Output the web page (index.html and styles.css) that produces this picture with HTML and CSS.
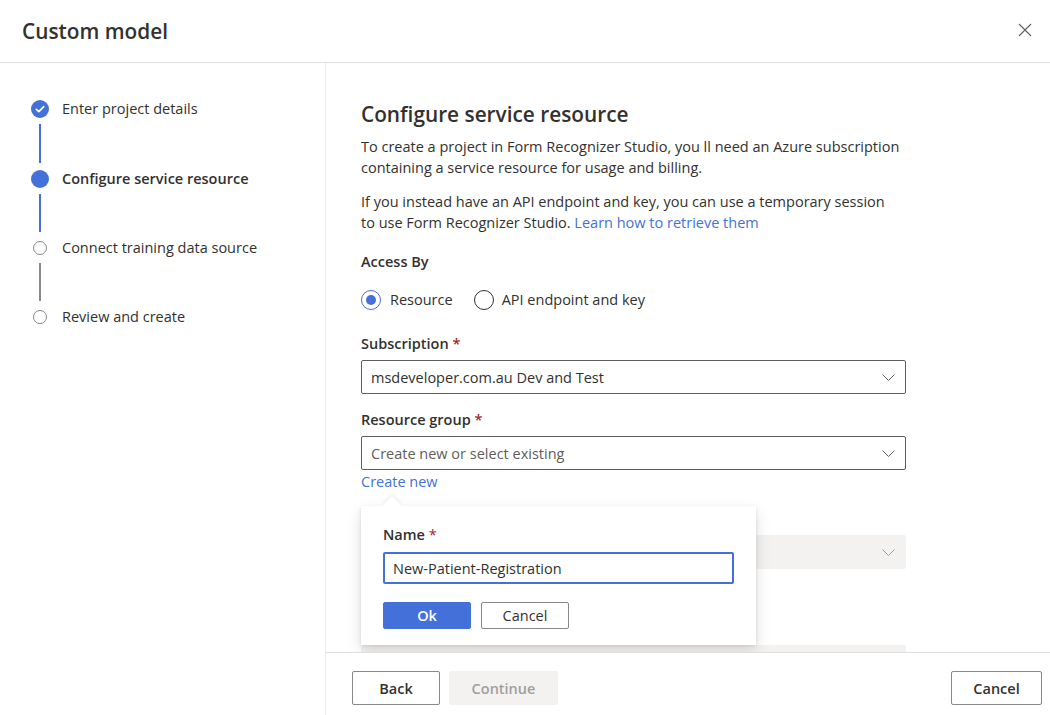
FILE: index.html
```html
<!DOCTYPE html>
<html lang="en">
<head>
<meta charset="utf-8">
<title>Custom model</title>
<link rel="stylesheet" href="styles.css">
</head>
<body>
<div class="dialog">
  <header class="header">
    <h1 class="title">Custom model</h1>
    <button class="close" aria-label="Close">
      <svg width="14" height="14" viewBox="0 0 14 14"><path d="M1 1 L13 13 M13 1 L1 13" stroke="#605e5c" stroke-width="1.1" fill="none"/></svg>
    </button>
  </header>
  <div class="body">
    <nav class="steps">
      <div class="step step-first">
        <div class="rail">
          <span class="dot dot-done"><svg width="18" height="18" viewBox="0 0 18 18"><path d="M5.3 9.3 L7.9 11.7 L12.7 6.6" stroke="#fff" stroke-width="1.7" fill="none" stroke-linecap="round" stroke-linejoin="round"/></svg></span>
          <span class="line line-active"></span>
        </div>
        <span class="step-label">Enter project details</span>
      </div>
      <div class="step">
        <div class="rail">
          <span class="dot dot-current"></span>
          <span class="line line-active"></span>
        </div>
        <span class="step-label step-label-current">Configure service resource</span>
      </div>
      <div class="step">
        <div class="rail">
          <span class="dot-box"><span class="dot-empty"></span></span>
          <span class="line"></span>
        </div>
        <span class="step-label">Connect training data source</span>
      </div>
      <div class="step step-last">
        <div class="rail">
          <span class="dot-box"><span class="dot-empty"></span></span>
        </div>
        <span class="step-label">Review and create</span>
      </div>
    </nav>
    <main class="main">
      <div class="content">
        <div class="form">
          <h2 class="heading">Configure service resource</h2>
          <p class="desc">To create a project in Form Recognizer Studio, you ll need an Azure subscription containing a service resource for usage and billing.</p>
          <p class="desc desc-second">If you instead have an API endpoint and key, you can use a temporary session to use Form Recognizer Studio. <a class="link" href="#">Learn how to retrieve them</a></p>
          <div class="group-label">Access By</div>
          <div class="radios">
            <span class="radio radio-on"><span class="radio-circle"></span><span>Resource</span></span>
            <span class="radio"><span class="radio-circle"></span><span>API endpoint and key</span></span>
          </div>
          <div class="field-label">Subscription <span class="req">*</span></div>
          <div class="select">
            <span class="select-text">msdeveloper.com.au Dev and Test</span>
            <svg class="chev" width="13" height="7" viewBox="0 0 13 7"><path d="M0.5 0.5 L6.5 6.5 L12.5 0.5" stroke="#605e5c" stroke-width="1" fill="none"/></svg>
          </div>
          <div class="field-label field-label-gap">Resource group <span class="req">*</span></div>
          <div class="select">
            <span class="select-text placeholder">Create new or select existing</span>
            <svg class="chev" width="13" height="7" viewBox="0 0 13 7"><path d="M0.5 0.5 L6.5 6.5 L12.5 0.5" stroke="#605e5c" stroke-width="1" fill="none"/></svg>
          </div>
          <div class="create-wrap">
            <a class="link create-link" href="#">Create new</a>
            <div class="callout">
              <div class="field-label">Name <span class="req req-name">*</span></div>
              <div class="text-input">New-Patient-Registration</div>
              <div class="callout-actions">
                <button class="btn btn-primary btn-small">Ok</button>
                <button class="btn btn-small">Cancel</button>
              </div>
            </div>
          </div>
          <div class="select select-disabled select-first-disabled">
            <svg class="chev" width="13" height="7" viewBox="0 0 13 7"><path d="M0.5 0.5 L6.5 6.5 L12.5 0.5" stroke="#a19f9d" stroke-width="1" fill="none"/></svg>
          </div>
          <div class="select select-disabled select-second-disabled"></div>
        </div>
      </div>
      <footer class="footer">
        <button class="btn btn-back">Back</button>
        <button class="btn btn-disabled btn-continue">Continue</button>
        <span class="footer-spacer"></span>
        <button class="btn btn-cancel">Cancel</button>
      </footer>
    </main>
  </div>
</div>
</body>
</html>
```

FILE: styles.css
```css
* { box-sizing: border-box; }
html, body { margin: 0; padding: 0; background: #fff; }
body {
  font-family: "Open Sans", "Noto Sans", sans-serif;
  font-size: 14.5px;
  color: #323130;
}
.dialog {
  width: 1050px;
  height: 715px;
  display: flex;
  flex-direction: column;
  overflow: hidden;
}
.header {
  height: 63px;
  flex: none;
  display: flex;
  align-items: center;
  justify-content: space-between;
  padding: 0 18px 0 22px;
  border-bottom: 1px solid #e1dfdd;
}
.title {
  margin: 0;
  font-size: 20.8px;
  font-weight: 600;
  line-height: 28px;
  color: #323130;
  padding-bottom: 1px;
}
.close {
  border: 0;
  background: none;
  padding: 0;
  width: 14px;
  height: 14px;
  display: flex;
  margin-bottom: 3px;
}
.body {
  flex: 1;
  display: flex;
  min-height: 0;
}
.steps {
  width: 326px;
  flex: none;
  border-right: 1px solid #edebe9;
  padding: 37px 0 0 31px;
  display: flex;
  flex-direction: column;
}
.step {
  display: flex;
  height: 69px;
}
.step-first { height: 70px; }
.step-last { height: auto; }
.rail {
  width: 18px;
  display: flex;
  flex-direction: column;
  align-items: center;
  flex: none;
}
.dot {
  width: 18px;
  height: 18px;
  border-radius: 50%;
  background: #4471d9;
  display: flex;
  flex: none;
}
.dot-box {
  width: 18px;
  height: 18px;
  display: flex;
  align-items: center;
  justify-content: center;
  flex: none;
}
.dot-empty {
  width: 14px;
  height: 14px;
  border-radius: 50%;
  border: 1px solid #8a8886;
}
.line {
  width: 2px;
  flex: 1;
  margin: 6px 0 7px;
  background: #8a8886;
}
.line-active { background: #4471d9; }
.step-label {
  margin-left: 13px;
  line-height: 20px;
  height: 20px;
  margin-top: -1px;
  color: #323130;
}
.step-label-current { font-weight: 600; }
.main {
  flex: 1;
  display: flex;
  flex-direction: column;
  min-width: 0;
}
.content {
  flex: 1;
  min-height: 0;
  overflow: hidden;
  padding: 37px 0 0 35px;
}
.form {
  width: 545px;
  display: flex;
  flex-direction: column;
  align-items: stretch;
}
.heading {
  margin: 0 0 8px;
  font-size: 20.8px;
  font-weight: 600;
  line-height: 28px;
}
.desc {
  margin: 0;
  line-height: 21px;
  max-width: 540px;
}
.desc-second { margin-top: 13px; }
.link {
  color: #4471d9;
  text-decoration: none;
}
.group-label {
  margin-top: 19px;
  line-height: 20px;
  font-weight: 600;
}
.radios {
  margin-top: 18px;
  display: flex;
  gap: 21px;
  height: 20px;
  align-items: center;
}
.radio {
  display: flex;
  align-items: center;
  gap: 8px;
  line-height: 20px;
}
.radio-circle {
  width: 20px;
  height: 20px;
  border-radius: 50%;
  border: 1px solid #323130;
  display: flex;
  align-items: center;
  justify-content: center;
}
.radio-on .radio-circle { border-color: #4471d9; }
.radio-on .radio-circle::after {
  content: "";
  width: 10px;
  height: 10px;
  border-radius: 50%;
  background: #4471d9;
}
.radio-on span:last-child { margin-left: 1px; }
.field-label {
  line-height: 20px;
  font-weight: 600;
  margin-top: 24px;
}
.field-label-gap { margin-top: 16px; }
.req { color: #a4262c; font-weight: 600; }
.select {
  margin-top: 6px;
  height: 34px;
  border: 1px solid #605e5c;
  border-radius: 2px;
  display: flex;
  align-items: center;
  padding: 0 10px 0 9px;
}
.select-text { flex: 1; white-space: nowrap; }
.placeholder { color: #605e5c; }
.chev { flex: none; margin-left: auto; }
.create-wrap {
  position: relative;
  margin-top: 2px;
  line-height: 20px;
  height: 20px;
}
.create-link { display: inline-block; }
.callout {
  position: absolute;
  left: 0;
  top: 34px;
  width: 395px;
  height: 139px;
  background: #fff;
  padding: 19px 22px 0;
  box-shadow: 0 6.4px 14.4px rgba(0, 0, 0, 0.13), 0 1.2px 3.6px rgba(0, 0, 0, 0.11);
  z-index: 2;
}
.callout::before {
  content: "";
  position: absolute;
  left: 24px;
  top: -7px;
  width: 14px;
  height: 14px;
  background: #fff;
  transform: rotate(45deg);
  box-shadow: -2px -2px 4px rgba(0, 0, 0, 0.06);
}
.callout .field-label {
  margin-top: 0;
  position: relative;
}
.req-name { color: #a4262c; font-weight: 400; }
.text-input {
  margin-top: 7px;
  width: 351px;
  height: 32px;
  border: 2px solid #4471d9;
  border-radius: 2px;
  padding: 0 8px;
  line-height: 29px;
  white-space: nowrap;
}
.callout-actions {
  margin-top: 18px;
  display: flex;
  gap: 10px;
}
.btn {
  font-family: inherit;
  font-size: 14.5px;
  font-weight: 600;
  color: #323130;
  background: #fff;
  border: 1px solid #8a8886;
  border-radius: 2px;
  height: 34px;
  padding: 0;
  display: flex;
  align-items: center;
  justify-content: center;
}
.btn-small {
  height: 27px;
  width: 88px;
  font-weight: 400;
}
.btn-primary {
  background: #4471d9;
  border-color: #4471d9;
  color: #fff;
  font-weight: 600;
}
.select-disabled {
  background: #f3f2f1;
  border-color: #f3f2f1;
}
.select-first-disabled { margin-top: 43px; }
.select-second-disabled { margin-top: 76px; }
.footer {
  height: 63px;
  flex: none;
  border-top: 1px solid #e1dfdd;
  display: flex;
  align-items: flex-start;
  padding: 18px 8px 0 26px;
}
.btn-back { width: 88px; }
.btn-continue { width: 109px; margin-left: 9px; }
.btn-disabled {
  background: #f3f2f1;
  border-color: #f3f2f1;
  color: #a19f9d;
}
.footer-spacer { flex: 1; }
.btn-cancel { width: 91px; }
```
